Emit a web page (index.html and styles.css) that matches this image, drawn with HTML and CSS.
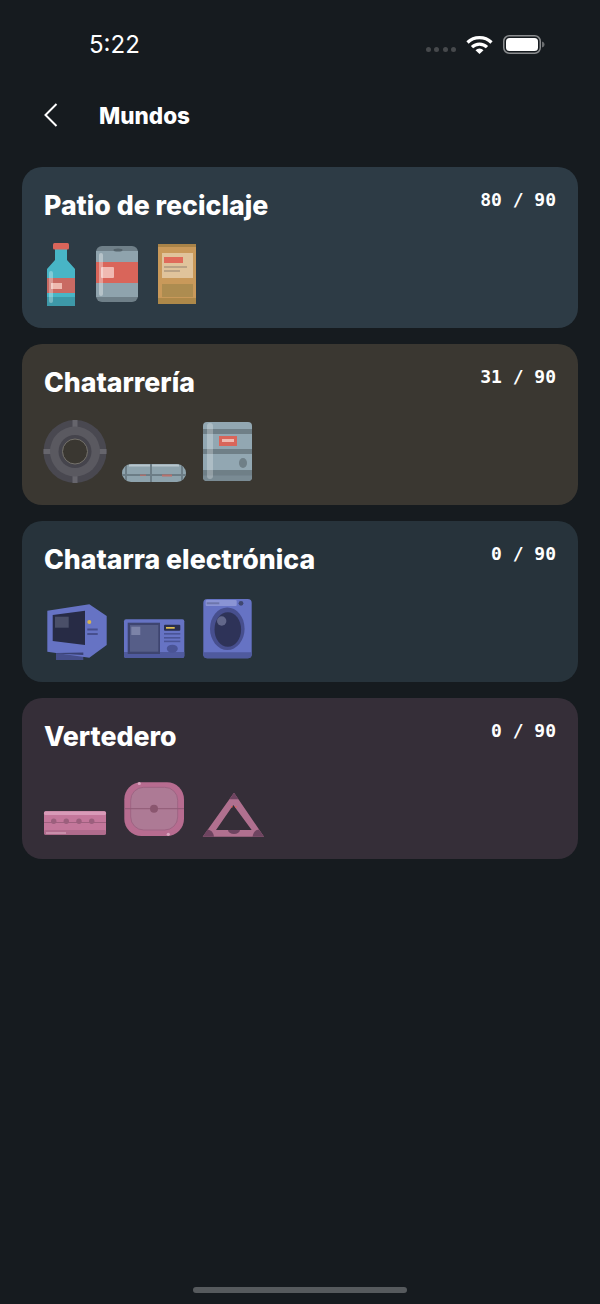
FILE: index.html

```html
<!DOCTYPE html>
<html lang="es">
<head>
<meta charset="UTF-8">
<meta name="viewport" content="width=device-width, initial-scale=1.0">
<title>Mundos</title>
<link rel="stylesheet" href="styles.css">
</head>
<body>

<div class="status">
  <span class="time">5:22</span>
  <div class="status-icons">
    <div class="signal"><i></i><i></i><i></i><i></i></div>
    <svg class="wifi" width="27" height="19" viewBox="0 0 27 19">
      <path d="M1.5 7.5A17 17 0 0 1 25.5 7.5" fill="none" stroke="#fff" stroke-width="3.2"/>
      <path d="M6 12.2A10.6 10.6 0 0 1 21 12.2" fill="none" stroke="#fff" stroke-width="3.2"/>
      <path d="M13.5 19L9.5 15.2A5.7 5.7 0 0 1 17.5 15.2Z" fill="#fff"/>
    </svg>
    <svg class="battery" width="42" height="19" viewBox="0 0 42 19">
      <rect x="0.75" y="0.75" width="36.5" height="17.5" rx="5.5" fill="none" stroke="#8b8d8f" stroke-width="1.5"/>
      <rect x="3" y="3" width="32" height="13" rx="3.5" fill="#fff"/>
      <path d="M39 6.5c1.5 .4 2.5 1.5 2.5 3s-1 2.6-2.5 3z" fill="#6b6e70"/>
    </svg>
  </div>
</div>

<header class="nav">
  <svg class="back" width="14" height="24" viewBox="0 0 14 24">
    <path d="M12.5 1L1.5 12L12.5 23" fill="none" stroke="#fff" stroke-width="2"/>
  </svg>
  <h1>Mundos</h1>
</header>

<section class="worlds">

  <!-- Patio de reciclaje -->
  <article class="card card-recycle">
    <div class="card-head">
      <h2>Patio de reciclaje</h2>
      <span class="score">80 / 90</span>
    </div>
    <div class="icons">
      <svg width="50" height="70" viewBox="0 0 50 70">
        <path d="M15 12H27V23L35 32V69H7V32L15 23Z" fill="#48b5c6"/>
        <rect x="13" y="6" width="16" height="6.5" rx="1.5" fill="#d9655a"/>
        <rect x="7" y="41" width="28" height="15" fill="#c96a63"/>
        <rect x="11" y="46" width="11" height="6" fill="#eeb9b0"/>
        <rect x="7" y="60" width="28" height="9" fill="#3d98a8"/>
        <rect x="9" y="34" width="4" height="32" rx="2" fill="#fff" opacity=".3"/>
      </svg>
      <svg width="60" height="70" viewBox="0 0 60 70">
        <rect x="6" y="9" width="42" height="56" rx="6" fill="#6f7f88"/>
        <rect x="6" y="14" width="42" height="46" fill="#8fa3ad"/>
        <ellipse cx="28" cy="13" rx="4.5" ry="1.5" fill="#55636b"/>
        <rect x="6" y="25" width="42" height="21" fill="#d9655a"/>
        <rect x="11" y="30" width="13" height="11" rx="1" fill="#f0b9b2"/>
        <rect x="9" y="16" width="4" height="43" rx="2" fill="#fff" opacity=".35"/>
      </svg>
      <svg width="50" height="70" viewBox="0 0 50 70">
        <rect x="8" y="7" width="38" height="60" rx="1" fill="#c9995a"/>
        <rect x="8" y="7" width="38" height="3" fill="#a98348"/>
        <rect x="8" y="61" width="38" height="6" fill="#ad8849"/>
        <rect x="12" y="16" width="31" height="25" fill="#e0c39b"/>
        <rect x="14" y="20" width="19" height="6" fill="#e06a5a"/>
        <rect x="14" y="29" width="23" height="2" fill="#b9a285"/>
        <rect x="14" y="33" width="16" height="2" fill="#b9a285"/>
        <rect x="12" y="47" width="31" height="13" fill="#ad8c50"/>
      </svg>
    </div>
  </article>

  <!-- Chatarreria -->
  <article class="card card-scrap">
    <div class="card-head">
      <h2>Chatarrería</h2>
      <span class="score">31 / 90</span>
    </div>
    <div class="icons">
      <svg width="75" height="70" viewBox="0 0 75 70">
        <circle cx="35" cy="37.5" r="31.5" fill="#494850"/>
        <rect x="32.5" y="6" width="5" height="63" fill="#66656c"/>
        <rect x="3.5" y="35" width="63" height="5" fill="#66656c"/>
        <circle cx="35" cy="37.5" r="25" fill="#5a5960"/>
        <circle cx="35" cy="37.5" r="16.5" fill="#45444c"/>
        <circle cx="35" cy="37.5" r="12.5" fill="#3a3731" stroke="#75726c"/>
      </svg>
      <svg width="80" height="70" viewBox="0 0 80 70">
        <rect x="7" y="50" width="64" height="18" rx="9" fill="#8ea3ad"/>
        <rect x="14" y="50.5" width="50" height="2" fill="#b7c6cd"/>
        <rect x="7.5" y="60" width="63" height="2" fill="#6c7d86"/>
        <rect x="10" y="52" width="2" height="14" fill="#6c7d86"/>
        <rect x="66" y="52" width="2" height="14" fill="#6c7d86"/>
        <rect x="35" y="50" width="2" height="18" fill="#6c7d86"/>
        <rect x="25" y="60.5" width="6" height="1.5" fill="#a9716e"/>
        <rect x="47" y="60.5" width="10" height="2" fill="#b8716c"/>
      </svg>
      <svg width="75" height="70" viewBox="0 0 75 70">
        <rect x="8" y="8" width="49" height="59" rx="4" fill="#92a7b2"/>
        <rect x="8" y="15" width="49" height="5" fill="#6f7f87"/>
        <rect x="8" y="35" width="49" height="5" fill="#6f7f87"/>
        <path d="M8 56H57V63A4 4 0 0 1 53 67H12A4 4 0 0 1 8 63Z" fill="#7a8b94"/>
        <rect x="8" y="56" width="49" height="5.5" fill="#6f7f87"/>
        <rect x="12" y="9" width="6" height="56" rx="3" fill="#fff" opacity=".25"/>
        <rect x="24" y="22" width="18" height="10" fill="#d9655a"/>
        <rect x="27" y="25" width="12" height="3" fill="#efb9b0"/>
        <ellipse cx="48" cy="49" rx="4" ry="5" fill="#6f7f87"/>
      </svg>
    </div>
  </article>

  <!-- Chatarra electronica -->
  <article class="card card-electronic">
    <div class="card-head">
      <h2>Chatarra electrónica</h2>
      <span class="score">0 / 90</span>
    </div>
    <div class="icons">
      <svg width="75" height="70" viewBox="0 0 75 70">
        <path d="M16 60H43.3V69H16Z" fill="#454e8a"/>
        <path d="M7.3 19.7L49.3 13.3L66.7 25V54L49.3 66.7L7.3 60.7Z" fill="#6673c4"/>
        <path d="M16 62L43.3 61.5V64L16 62.5Z" fill="#3a4274"/>
        <path d="M12.7 24L45 19.7V54L12.7 50Z" fill="#272b45"/>
        <path d="M15 25.7H28.7V36.7H15Z" fill="#4a4f68"/>
        <circle cx="49.3" cy="31" r="2" fill="#d9b44f"/>
        <rect x="47.3" y="37.5" width="10.4" height="2" fill="#474f8e"/>
        <rect x="47.3" y="42" width="10.4" height="2" fill="#474f8e"/>
      </svg>
      <svg width="80" height="70" viewBox="0 0 80 70">
        <rect x="9" y="28.3" width="60.3" height="38.7" rx="2" fill="#6673c4"/>
        <path d="M9 61H69.3V65A2 2 0 0 1 67.3 67H11A2 2 0 0 1 9 65Z" fill="#4f5a9e"/>
        <rect x="12.7" y="31.7" width="32.3" height="31.3" fill="#3e4570"/>
        <rect x="15" y="34" width="28.3" height="26.7" fill="#565e88"/>
        <rect x="16.3" y="35.7" width="9" height="8.3" fill="#7c83a8"/>
        <rect x="49" y="33.7" width="16.3" height="6" rx="1" fill="#2a2f4d"/>
        <rect x="51" y="36" width="8.7" height="1.7" fill="#e0c050"/>
        <rect x="49" y="42" width="16.3" height="1.6" fill="#4a5496"/>
        <rect x="49" y="46" width="16.3" height="1.6" fill="#4a5496"/>
        <rect x="49" y="49.6" width="16.3" height="1.6" fill="#4a5496"/>
        <ellipse cx="57.3" cy="57.7" rx="5.5" ry="4" fill="#4a5496"/>
      </svg>
      <svg width="75" height="70" viewBox="0 0 75 70">
        <rect x="8.3" y="8" width="48.4" height="59.3" rx="4" fill="#6673c4"/>
        <path d="M8.3 61.3H56.7V63.3A4 4 0 0 1 52.7 67.3H12.3A4 4 0 0 1 8.3 63.3Z" fill="#4f5a9e"/>
        <rect x="10.7" y="9" width="31" height="6" rx="1" fill="#8a94d4"/>
        <rect x="11.7" y="11.3" width="12.6" height="2" fill="#6d76ab"/>
        <circle cx="46" cy="12.3" r="2.4" fill="#3f4770"/>
        <ellipse cx="32.3" cy="37.7" rx="17.3" ry="21.3" fill="#474f8e"/>
        <ellipse cx="32.8" cy="38.5" rx="13.3" ry="17.3" fill="#2e3358"/>
        <circle cx="26.7" cy="30" r="4.7" fill="#62678a"/>
      </svg>
    </div>
  </article>

  <!-- Vertedero -->
  <article class="card card-landfill">
    <div class="card-head">
      <h2>Vertedero</h2>
      <span class="score">0 / 90</span>
    </div>
    <div class="icons">
      <svg width="75" height="70" viewBox="0 0 75 70">
        <rect x="4" y="43.3" width="62" height="23.4" rx="2" fill="#c4779b"/>
        <rect x="4" y="43.3" width="62" height="3.7" rx="1.5" fill="#d99ab8"/>
        <rect x="4" y="62" width="62" height="4.7" rx="1.5" fill="#b06c8d"/>
        <rect x="4" y="54" width="62" height="1" fill="#a0607f"/>
        <circle cx="13.7" cy="53.3" r="2.7" fill="#9c5f7d"/>
        <circle cx="26.3" cy="53.3" r="2.7" fill="#9c5f7d"/>
        <circle cx="39" cy="53.3" r="2.7" fill="#9c5f7d"/>
        <circle cx="51.7" cy="53.3" r="2.7" fill="#9c5f7d"/>
        <rect x="6" y="64.5" width="20" height="1" fill="#e0b0c8"/>
      </svg>
      <svg width="80" height="70" viewBox="0 0 80 70">
        <rect x="9.3" y="14.3" width="59.7" height="53.7" rx="17" fill="#b76c90"/>
        <rect x="15.7" y="19.3" width="47" height="42.7" rx="13" fill="#ad7a95" stroke="#9e6483"/>
        <rect x="9.3" y="40.2" width="59.7" height="1" fill="#8f5a75"/>
        <circle cx="39" cy="40.7" r="4" fill="#8a566f"/>
        <circle cx="24.3" cy="15.5" r="1.6" fill="#d9a6bf"/>
        <circle cx="53.3" cy="66.3" r="1.6" fill="#d9a6bf"/>
      </svg>
      <svg width="75" height="70" viewBox="0 0 75 70">
        <path fill-rule="evenodd" d="M39 24.7L69 68.7H7.7ZM38.3 37L21 62H56.7Z" fill="#b0708f"/>
        <path d="M39 24.7L43.5 31.3H34.5Z" fill="#6e4460"/>
        <path d="M7.7 68.7L12.6 61.5Q18 62 19 68.7Z" fill="#6e4460"/>
        <path d="M69 68.7L64 61.5Q58.5 62 57.5 68.7Z" fill="#6e4460"/>
        <path d="M33 62H45A6 4 0 0 1 33 62Z" fill="#6e4460"/>
        <rect x="36" y="38" width="1.5" height="1.5" fill="#d9655a"/>
        <rect x="40" y="38" width="1.5" height="1.5" fill="#d9655a"/>
      </svg>
    </div>
  </article>

</section>

<div class="home-bar"></div>

</body>
</html>
```

FILE: styles.css

```css
html, body {
  height: 100%;
}
body {
  font-family: Inter, "Liberation Sans", sans-serif;
  background-color: #161b1f;
  color: #fff;
  margin: 0;
  display: flex;
  flex-direction: column;
}
.status {
  height: 88px;
  padding: 0 55px 0 89px;
  display: flex;
  align-items: center;
  justify-content: space-between;
  flex-shrink: 0;
}
.time {
  font-size: 24px;
}
.status-icons {
  display: flex;
  align-items: center;
}
.signal {
  display: flex;
  gap: 3.3px;
  margin: 10px 10px 0 0;
}
.signal i {
  width: 5px;
  height: 5px;
  border-radius: 50%;
  background: #46494c;
}
.battery {
  margin-left: 10px;
}
.nav {
  height: 54px;
  padding-left: 44px;
  display: flex;
  align-items: center;
  flex-shrink: 0;
}
.nav h1 {
  font-size: 22.5px;
  font-weight: 800;
  margin: 0 0 0 41px;
}
.worlds {
  margin-top: 25px;
  padding: 0 22px;
  display: flex;
  flex-direction: column;
  gap: 16.4px;
}
.card {
  height: 160.6px;
  box-sizing: border-box;
  padding: 21.6px 22px 0;
  border-radius: 20px;
}
.card-recycle { background: #2d3b45; }
.card-scrap { background: #3a3731; }
.card-electronic { background: #27333b; }
.card-landfill { background: #352e38; }
.card-head {
  height: 32px;
  display: flex;
  justify-content: space-between;
  align-items: flex-start;
}
.card-head h2 {
  font-size: 26.7px;
  line-height: 32px;
  font-weight: 800;
  margin: 0;
}
.score {
  font-family: "DejaVu Sans Mono", "Liberation Mono", monospace;
  font-size: 18px;
  font-weight: 700;
  line-height: 21px;
}
.icons {
  margin: 16.4px 0 0 -4px;
  height: 70px;
  display: flex;
}
.home-bar {
  width: 214px;
  height: 6px;
  border-radius: 3px;
  background: #565a5d;
  margin: auto auto 11px;
}
```
